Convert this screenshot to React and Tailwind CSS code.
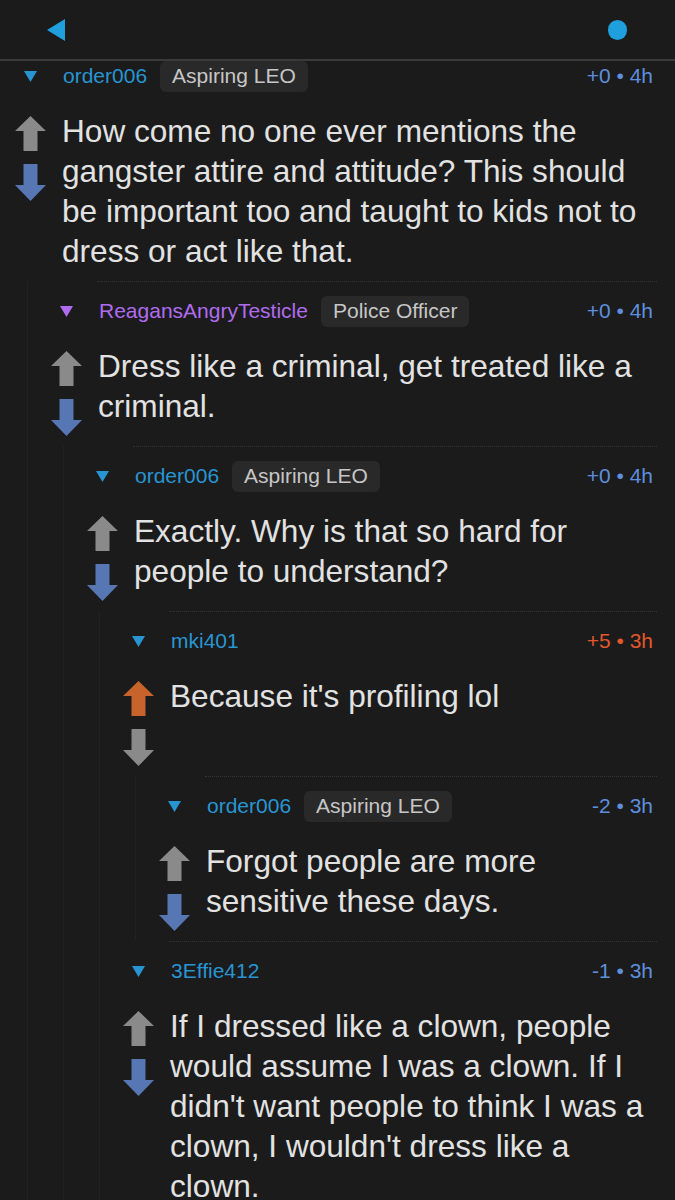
import React from "react";

const comments = [
  {
    depth: 0,
    user: "order006",
    flair: "Aspiring LEO",
    score: "+0 • 4h",
    vote: "down",
    text: "How come no one ever mentions the gangster attire and attitude? This should be important too and taught to kids not to dress or act like that.",
  },
  {
    depth: 1,
    user: "ReagansAngryTesticle",
    purple: true,
    flair: "Police Officer",
    score: "+0 • 4h",
    vote: "down",
    text: "Dress like a criminal, get treated like a criminal.",
  },
  {
    depth: 2,
    user: "order006",
    flair: "Aspiring LEO",
    score: "+0 • 4h",
    vote: "down",
    text: "Exactly. Why is that so hard for people to understand?",
  },
  {
    depth: 3,
    user: "mki401",
    score: "+5 • 3h",
    vote: "up",
    text: "Because it's profiling lol",
  },
  {
    depth: 4,
    user: "order006",
    flair: "Aspiring LEO",
    score: "-2 • 3h",
    vote: "down",
    text: "Forgot people are more sensitive these days.",
  },
  {
    depth: 3,
    user: "3Effie412",
    score: "-1 • 3h",
    vote: "down",
    text: "If I dressed like a clown, people would assume I was a clown. If I didn't want people to think I was a clown, I wouldn't dress like a clown.",
  },
];

function UpArrow({ color }) {
  return (
    <svg width="31" height="35" viewBox="0 0 31 35">
      <polygon points="15.5,0 31,15 22.5,15 22.5,35 8.5,35 8.5,15 0,15" fill={color} />
    </svg>
  );
}

function DownArrow({ color }) {
  return (
    <svg width="31" height="37" viewBox="0 0 31 37">
      <polygon points="8.5,0 22.5,0 22.5,21 31,21 15.5,37 0,21 8.5,21" fill={color} />
    </svg>
  );
}

function Comment({ c, first }) {
  const upColor = c.vote === "up" ? "#c8632c" : "#8a8a8a";
  const downColor = c.vote === "down" ? "#5676b4" : "#8a8a8a";
  const spacers = Array.from({ length: c.depth });

  return (
    <div className="flex">
      {spacers.map((_, i) => (
        <div key={i} className="w-9 shrink-0">
          <div className="ml-[27px] h-full w-px bg-[#222222]" />
        </div>
      ))}
      <div className="flex-1 min-w-0 pb-[10px]">
        {!first && (
          <div className="ml-[61px] mr-[18px] border-t border-dotted border-[#333333]" />
        )}
        <div className={`flex h-[30px] items-center ${first ? "" : "mt-[14px]"}`}>
          <svg className="ml-[24px] shrink-0" width="13" height="11" viewBox="0 0 13 11">
            <polygon points="0,0 13,0 6.5,11" fill={c.purple ? "#b06cf0" : "#2895d2"} />
          </svg>
          <span
            className={`ml-[26px] text-[21px] ${c.purple ? "text-[#b06cf0]" : "text-[#2895d2]"}`}
          >
            {c.user}
          </span>
          {c.flair && (
            <span className="ml-[13px] flex h-[31px] items-center rounded-[6px] bg-[#292929] px-[12px] text-[21px] text-[#c6c6c6]">
              {c.flair}
            </span>
          )}
          <span
            className={`ml-auto mr-[22px] text-[21px] ${c.vote === "up" ? "text-[#e0582c]" : "text-[#5e8fdf]"}`}
          >
            {c.score}
          </span>
        </div>
        <div className="mt-[20px] flex">
          <div className="ml-[15px] flex w-[31px] shrink-0 flex-col">
            <div className="mt-[5px]">
              <UpArrow color={upColor} />
            </div>
            <div className="mt-[13px]">
              <DownArrow color={downColor} />
            </div>
          </div>
          <p className="ml-[16px] mr-[16px] text-[31.6px] leading-[40px] text-[#e2e2e2]">
            {c.text}
          </p>
        </div>
      </div>
    </div>
  );
}

export default function App() {
  return (
    <div
      className="min-h-[1200px] w-[675px] overflow-hidden bg-[#1b1b1b]"
      style={{ fontFamily: '"Liberation Sans", Arial, sans-serif' }}
    >
      {/* top bar */}
      <div className="flex h-[61px] items-center justify-between border-b-2 border-[#3a3a3a] px-[47px] pr-[48px]">
        <svg width="18" height="22" viewBox="0 0 18 22">
          <polygon points="18,0 18,22 0,11" fill="#1fa0dc" />
        </svg>
        <div className="h-[20px] w-[19px] rounded-full bg-[#1fa0dc]" />
      </div>

      {comments.map((c, i) => (
        <Comment key={i} c={c} first={i === 0} />
      ))}
    </div>
  );
}
